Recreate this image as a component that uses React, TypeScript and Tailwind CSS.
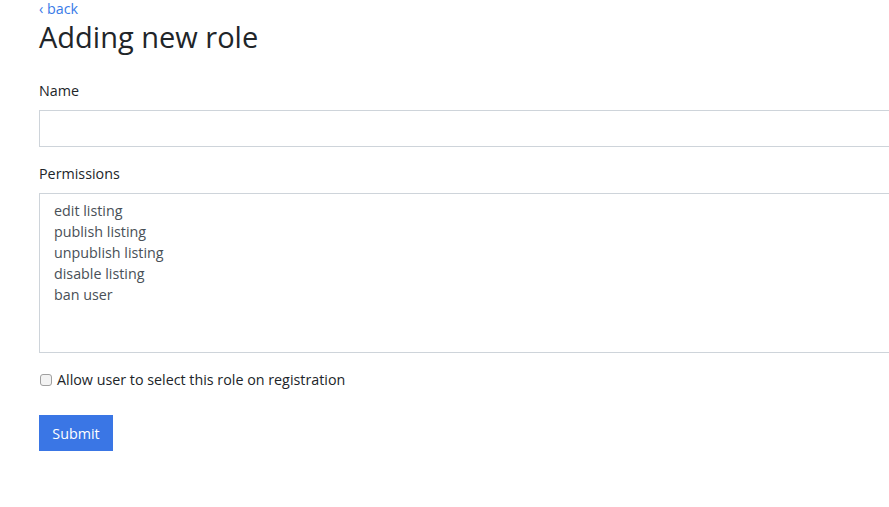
import React from 'react';

const permissions = ['edit listing', 'publish listing', 'unpublish listing', 'disable listing', 'ban user'];

export default function App() {
  return (
    <div
      className="h-[507px] w-full overflow-hidden bg-white text-[14.3px] leading-[23px] text-[#212529]"
      style={{ fontFamily: '"Open Sans", "Noto Sans", sans-serif' }}
    >
      <div className="w-[1110px] pl-[39px]">
        <a href="#" className="block leading-[18px] text-[#3a7be8]">
          &lsaquo; back
        </a>
        <h2 className="mt-[1px] text-[29px] leading-[35px] font-normal">Adding new role</h2>

        <form className="mt-[25px]">
          <div className="mb-[15px]">
            <label className="mb-[8px] block">Name</label>
            <input
              type="text"
              className="block h-[37px] w-full rounded-none border border-[#ced4da] px-3 outline-none"
            />
          </div>

          <div className="mb-[15px]">
            <label className="mb-[8px] block">Permissions</label>
            <div className="h-[160px] w-full border border-[#ced4da] px-[14px] pt-[6px] leading-[21px] text-[#495057]">
              {permissions.map((p) => (
                <div key={p}>{p}</div>
              ))}
            </div>
          </div>

          <label className="flex items-center gap-[5px]">
            <span className="ml-[1px] h-[12px] w-[12px] rounded-[3px] border border-[#a0a0a0] bg-[#f3f3f3]" />
            <span>Allow user to select this role on registration</span>
          </label>

          <button
            type="button"
            className="mt-[24px] h-[36px] w-[74px] bg-[#3a76e5] text-white"
          >
            Submit
          </button>
        </form>
      </div>
    </div>
  );
}
